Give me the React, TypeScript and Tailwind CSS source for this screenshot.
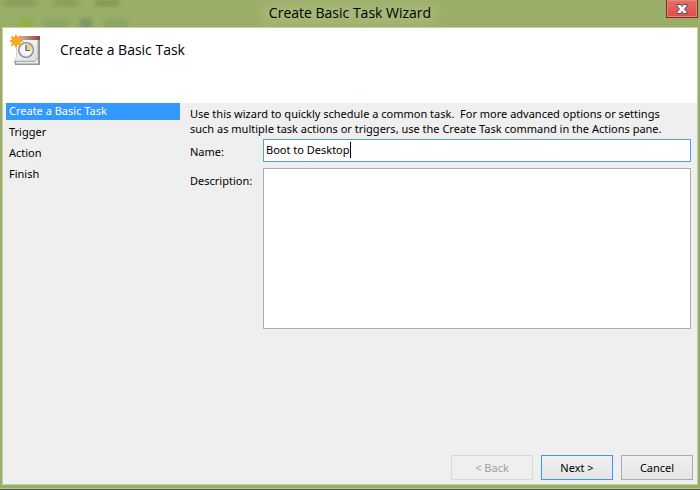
import { useState } from "react";

const steps = ["Create a Basic Task", "Trigger", "Action", "Finish"];

function TaskIcon() {
  return (
    <svg className="h-8 w-8 shrink-0" viewBox="0 0 32 32" aria-hidden="true">
      <defs>
        <linearGradient id="page" x1="0" y1="0" x2="1" y2="1">
          <stop offset="0" stopColor="#ffffff" />
          <stop offset="1" stopColor="#dcdcdc" />
        </linearGradient>
        <linearGradient id="binding" x1="0" y1="0" x2="1" y2="0">
          <stop offset="0" stopColor="#d9b9a8" />
          <stop offset="1" stopColor="#8a4a38" />
        </linearGradient>
      </defs>
      <path d="M8 3H31V31H6V28.500H4.500L8 24Z" fill="#939393" />
      <path d="M7 5H29V29.500H7Z" fill="#ededed" />
      <path d="M7.500 5H28.500V23.500L25.500 27H5L7.500 23Z" fill="url(#page)" stroke="#c4c4c4" strokeWidth=".7" />
      <path d="M5 27.500H26L29 24" fill="none" stroke="#a8a8a8" />
      <rect x="9" y="2" width="22" height="4" fill="url(#binding)" />
      <circle cx="17" cy="16" r="8" fill="#84888c" />
      <circle cx="17" cy="16" r="6.500" fill="#f3f5f8" stroke="#c0c5cc" strokeWidth=".8" />
      <path d="M17 16V10A6 6 0 0 1 23 16Z" fill="#f4d388" />
      <path d="M17 11V16.500H21" fill="none" stroke="#56606c" strokeWidth="1.200" />
      <path
        d="M7 0L8.600 3.400L12 1.600L10.800 5.200L15 7L10.800 8.600L12.200 12.200L8.600 10.600L7 14.400L5.400 10.600L1.800 12.400L3.200 8.600L0 7L3.200 5.400L1.600 1.800L5.400 3.400Z"
        fill="#f59a12"
      />
      <circle cx="7" cy="7" r="4" fill="#fbab22" />
    </svg>
  );
}

function Backdrop() {
  return (
    <div className="pointer-events-none absolute inset-0 overflow-hidden" aria-hidden="true">
      <div className="flex gap-[17px] pl-[3px] opacity-50 blur-[2px]">
        <span className="h-[6px] w-[34px] bg-[#748a4a]" />
        <span className="h-[6px] w-6 bg-[#748a4a]" />
        <span className="h-[6px] w-6 bg-[#66803f]" />
      </div>
      <div className="flex gap-3 pt-3 pl-5 opacity-60 blur-[2px]">
        <span className="h-3 w-3 bg-[#8fae2c]" />
        <span className="h-3 w-6 bg-[#83a163]" />
        <span className="h-3 w-3 bg-[#66866a]" />
        <span className="h-3 w-6 bg-[#83a163]" />
      </div>
      <div className="absolute top-1 left-1/2 h-5 w-44 -translate-x-1/2 rounded-full bg-[#b5c88c] opacity-40 blur-[6px]" />
    </div>
  );
}

const buttonBase = "h-[25px] border text-center";

export default function App() {
  const [name, setName] = useState("Boot to Desktop");
  return (
    <div className="flex min-h-screen flex-col border-b border-[#4d5440] bg-[#9bae69] font-['Noto_Sans','Open_Sans',sans-serif] text-[11px] leading-[15px] text-black">
      <header className="relative flex h-[27px] items-start justify-center">
        <Backdrop />
        <h1 className="relative font-['Open_Sans','Noto_Sans',sans-serif] text-[14px] leading-[26px]">
          Create Basic Task Wizard
        </h1>
        <button
          type="button"
          aria-label="Close"
          className="absolute top-0 right-[2px] flex h-[18px] w-8 items-center justify-center border border-t-0 border-[#7d2b22] bg-linear-to-b from-[#e2716a] to-[#e04a40] shadow-[inset_0_0_0_1px_#ea847c]"
        >
          <svg className="h-[10px] w-3" viewBox="0 0 12 10" aria-hidden="true">
            <path
              d="M1 .5H4.500L6 2.500L7.500 .5H11V2L8.500 5L11 8V9.500H7.500L6 7.500L4.500 9.500H1V8L3.500 5L1 2Z"
              fill="#ffffff"
              stroke="#4d5068"
            />
          </svg>
        </button>
      </header>

      <div className="mx-[2px] mb-[3px] flex grow flex-col border border-[#c3d09f] bg-[#efefef]">
        <div className="flex h-[75px] items-start gap-[19px] bg-white px-[6px] pt-[6px]">
          <TaskIcon />
          <h2 className="pt-[6px] font-['Open_Sans','Noto_Sans',sans-serif] text-[14px] leading-5">
            Create a Basic Task
          </h2>
        </div>

        <main className="flex grow gap-[10px] pr-[6px] pl-[3px]">
          <ol className="w-[174px] shrink-0">
            {steps.map((step, i) => (
              <li
                key={step}
                aria-current={i === 0 ? "step" : undefined}
                className={
                  i === 0
                    ? "mb-1 h-[17px] bg-[#3399ff] px-[3px] leading-4 text-white"
                    : "mb-1 h-[17px] px-[3px] leading-4"
                }
              >
                {step}
              </li>
            ))}
          </ol>

          <form className="grow" onSubmit={(e) => e.preventDefault()}>
            <p className="pt-[3px] pr-3">
              Use this wizard to quickly schedule a common task.&nbsp; For more advanced options or settings
              such as multiple task actions or triggers, use the Create Task command in the Actions pane.
            </p>
            <div className="mt-[3px] grid grid-cols-[73px_1fr] gap-y-[6px]">
              <label htmlFor="name" className="pt-[5px]">
                Name:
              </label>
              <div className="flex h-[23px] items-center border border-[#569de5] bg-white px-[2px] pb-[2px]">
                <input
                  id="name"
                  type="text"
                  value={name}
                  onChange={(e) => setName(e.target.value)}
                  className="max-w-full [field-sizing:content] caret-transparent outline-none"
                />
                <span className="h-4 w-px bg-black" aria-hidden="true" />
              </div>
              <label htmlFor="description" className="pt-[5px]">
                Description:
              </label>
              <textarea
                id="description"
                className="h-[161px] w-full resize-none border border-[#abadb3] bg-white px-[2px] outline-none"
              />
            </div>
          </form>
        </main>

        <footer className="flex justify-end gap-2 pr-1 pb-1">
          <button type="button" disabled className={`${buttonBase} w-[82px] border-[#d9d9d9] text-[#a0a0a0]`}>
            &lt; Back
          </button>
          <button
            type="button"
            className={`${buttonBase} w-[72px] border-[#3399ff] bg-linear-to-b from-[#f0f0f0] to-[#e5e5e5]`}
          >
            Next &gt;
          </button>
          <button
            type="button"
            className={`${buttonBase} w-[72px] border-[#acacac] bg-linear-to-b from-[#f0f0f0] to-[#e5e5e5]`}
          >
            Cancel
          </button>
        </footer>
      </div>
      <div className="h-px bg-[#b9c893]" />
    </div>
  );
}
